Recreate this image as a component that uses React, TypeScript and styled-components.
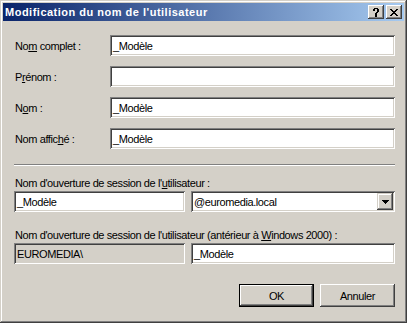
import styled, { createGlobalStyle } from "styled-components";

const Global = createGlobalStyle`
    html, body {
        margin: 0;
        padding: 0;
        background: #d4d0c8;
    }
    * {
        box-sizing: border-box;
    }
`;

const face = "#d4d0c8";
const shadow = "#808080";
const darkShadow = "#404040";

const Window = styled.div`
    width: 407px;
    height: 323px;
    background: ${face};
    padding: 3px;
    display: flex;
    flex-direction: column;
    font-family: "Liberation Sans", Arial, sans-serif;
    font-size: 11px;
    letter-spacing: -0.4px;
    color: #000;
    box-shadow: inset -1px -1px ${darkShadow}, inset 1px 1px ${face},
        inset -2px -2px ${shadow}, inset 2px 2px #fff;
`;

const TitleBar = styled.div`
    height: 18px;
    display: flex;
    align-items: center;
    padding: 0 2px 0 2px;
    background: linear-gradient(to right, #0a246a, #a6caf0);
    gap: 2px;
`;

const Title = styled.div`
    flex: 1;
    color: #fff;
    font-weight: bold;
    font-size: 11px;
    letter-spacing: 0.5px;
    white-space: nowrap;
`;

const CaptionButton = styled.div`
    width: 16px;
    height: 14px;
    background: ${face};
    display: flex;
    align-items: center;
    justify-content: center;
    box-shadow: inset -1px -1px ${darkShadow}, inset 1px 1px #fff,
        inset -2px -2px ${shadow};
`;

const Body = styled.div`
    flex: 1;
    display: flex;
    flex-direction: column;
    padding: 14px 9px 0 11px;
`;

const FieldGrid = styled.div`
    display: grid;
    grid-template-columns: 96px 1fr;
    row-gap: 10px;
    align-items: center;
`;

const Label = styled.label`
    padding-left: 1px;
    white-space: nowrap;
`;

const Key = styled.span`
    text-decoration: underline;
    text-underline-offset: 1px;
`;

const Edit = styled.div<{ $readOnly?: boolean }>`
    height: 21px;
    background: ${(p) => (p.$readOnly ? face : "#fff")};
    display: flex;
    align-items: center;
    padding: 0 3px;
    white-space: nowrap;
    box-shadow: inset 1px 1px ${shadow}, inset -1px -1px #fff,
        inset 2px 2px ${darkShadow}, inset -2px -2px ${face};
`;

const Separator = styled.div`
    margin: 15px 0 11px 0;
    height: 2px;
    border-top: 1px solid ${shadow};
    border-bottom: 1px solid #fff;
`;

const SectionLabel = styled.div`
    padding-left: 1px;
    height: 13px;
    line-height: 13px;
    margin-bottom: 1px;
    white-space: nowrap;
`;

const SplitRow = styled.div`
    display: grid;
    grid-template-columns: 171px 1fr;
    column-gap: 6px;
    margin-bottom: 17px;
`;

const Combo = styled(Edit)`
    justify-content: space-between;
    padding-right: 2px;
`;

const DropButton = styled.div`
    width: 16px;
    height: 17px;
    background: ${face};
    display: flex;
    align-items: center;
    justify-content: center;
    box-shadow: inset -1px -1px ${darkShadow}, inset 1px 1px ${face},
        inset -2px -2px ${shadow}, inset 2px 2px #fff;
`;

const ButtonRow = styled.div`
    display: flex;
    justify-content: flex-end;
    gap: 6px;
    margin-top: 3px;
`;

const Button = styled.div<{ $default?: boolean }>`
    width: 75px;
    height: 23px;
    display: flex;
    align-items: center;
    justify-content: center;
    background: ${face};
    box-shadow: ${(p) =>
        p.$default
            ? `inset 0 0 0 1px #000, inset -2px -2px ${darkShadow}, inset 2px 2px #fff, inset -3px -3px ${shadow}`
            : `inset -1px -1px ${darkShadow}, inset 1px 1px #fff, inset -2px -2px ${shadow}`};
`;

function HelpGlyph() {
    return (
        <svg width="6" height="9" viewBox="0 0 6 9" shapeRendering="crispEdges">
            <path
                d="M1 0h4v1h1v3h-1v1h-1v2h-2v-2h1v-1h1v-1h-0v-2h-2v2h-2v-2h1z M2 7h2v2h-2z"
                fill="#000"
            />
        </svg>
    );
}

function CloseGlyph() {
    return (
        <svg width="8" height="7" viewBox="0 0 8 7" shapeRendering="crispEdges">
            <path
                d="M0 0h2v1h1v1h2v-1h1v-1h2v1h-1v1h-1v1h-1v1h1v1h1v1h1v1h-2v-1h-1v-1h-2v1h-1v1h-2v-1h1v-1h1v-1h1v-1h-1v-1h-1v-1h-1z"
                fill="#000"
            />
        </svg>
    );
}

function ArrowGlyph() {
    return (
        <svg width="7" height="4" viewBox="0 0 7 4" shapeRendering="crispEdges">
            <path d="M0 0h7v1h-1v1h-1v1h-1v1h-1v-1h-1v-1h-1v-1h-1z" fill="#000" />
        </svg>
    );
}

const fields = [
    { label: ["No", "m", " complet :"], value: "_Modèle" },
    { label: ["P", "r", "énom :"], value: "" },
    { label: ["N", "o", "m :"], value: "_Modèle" },
    { label: ["Nom affic", "h", "é :"], value: "_Modèle" },
];

export default function App() {
    return (
        <>
            <Global />
            <Window>
                <TitleBar>
                    <Title>Modification du nom de l'utilisateur</Title>
                    <CaptionButton>
                        <HelpGlyph />
                    </CaptionButton>
                    <CaptionButton>
                        <CloseGlyph />
                    </CaptionButton>
                </TitleBar>
                <Body>
                    <FieldGrid>
                        {fields.map((f) => (
                            <>
                                <Label key={f.label.join("")}>
                                    {f.label[0]}
                                    <Key>{f.label[1]}</Key>
                                    {f.label[2]}
                                </Label>
                                <Edit key={f.label.join("") + "-v"}>{f.value}</Edit>
                            </>
                        ))}
                    </FieldGrid>
                    <Separator />
                    <SectionLabel>
                        Nom d'ouverture de session de l'<Key>u</Key>tilisateur :
                    </SectionLabel>
                    <SplitRow>
                        <Edit>_Modèle</Edit>
                        <Combo>
                            <span>@euromedia.local</span>
                            <DropButton>
                                <ArrowGlyph />
                            </DropButton>
                        </Combo>
                    </SplitRow>
                    <SectionLabel>
                        Nom d'ouverture de session de l'utilisateur (antérieur à{" "}
                        <Key>W</Key>indows 2000) :
                    </SectionLabel>
                    <SplitRow>
                        <Edit $readOnly>EUROMEDIA\</Edit>
                        <Edit>_Modèle</Edit>
                    </SplitRow>
                    <ButtonRow>
                        <Button $default>OK</Button>
                        <Button>Annuler</Button>
                    </ButtonRow>
                </Body>
            </Window>
        </>
    );
}
